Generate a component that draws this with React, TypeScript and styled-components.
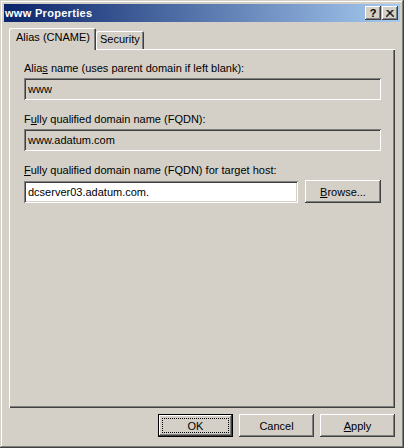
import React from 'react';
import styled, {createGlobalStyle} from 'styled-components';

const GlobalStyle = createGlobalStyle`
  html, body {
    margin: 0;
    padding: 0;
    background: #d4d0c8;
  }
  body {
    font-family: "Liberation Sans", Arial, sans-serif;
    font-size: 11px;
  }
`;

const Window = styled.div`
  width: 404px;
  height: 448px;
  box-sizing: border-box;
  padding: 4px;
  background: #d4d0c8;
  display: flex;
  flex-direction: column;
  box-shadow:
    inset -1px -1px #404040,
    inset 1px 1px #d4d0c8,
    inset -2px -2px #808080,
    inset 2px 2px #ffffff;
`;

const TitleBar = styled.div`
  height: 18px;
  display: flex;
  align-items: center;
  padding: 0 2px 0 1px;
  background: linear-gradient(to right, #0a246a, #a6caf0);
`;

const Title = styled.span`
  flex: 1;
  color: #ffffff;
  font-weight: bold;
  font-size: 11px;
  letter-spacing: 0.3px;
`;

const CaptionButtons = styled.div`
  display: flex;
  gap: 1px;
`;

const CaptionButton = styled.div`
  width: 16px;
  height: 14px;
  box-sizing: border-box;
  background: #d4d0c8;
  display: flex;
  align-items: center;
  justify-content: center;
  font-weight: bold;
  font-size: 11px;
  color: #000;
  box-shadow:
    inset -1px -1px #404040,
    inset 1px 1px #ffffff,
    inset -2px -2px #808080;
`;

const Body = styled.div`
  flex: 1;
  display: flex;
  flex-direction: column;
  padding: 6px 5px 7px 5px;
`;

const TabStrip = styled.div`
  height: 21px;
  display: flex;
  align-items: flex-end;
  position: relative;
  z-index: 1;
`;

const Tab = styled.div<{$active?: boolean}>`
  box-sizing: border-box;
  height: ${p => (p.$active ? '22px' : '18px')};
  margin-bottom: ${p => (p.$active ? '-1px' : '0')};
  padding: ${p => (p.$active ? '3px 6px 0 7px' : '2px 4px 0 4px')};
  background: #d4d0c8;
  border-radius: 2px 2px 0 0;
  line-height: 13px;
  color: #000;
  box-shadow:
    inset 1px 1px #ffffff,
    inset -1px 0 #404040,
    inset -2px 0 #808080;
`;

const Panel = styled.div`
  flex: 1;
  display: flex;
  flex-direction: column;
  gap: 13px;
  padding: 13px 14px 0 15px;
  box-shadow:
    inset 1px 1px #ffffff,
    inset -1px -1px #404040,
    inset -2px -2px #808080;
`;

const Group = styled.div`
  display: flex;
  flex-direction: column;
  gap: 3px;
`;

const Label = styled.label`
  line-height: 13px;
  color: #000;
`;

const Row = styled.div`
  display: flex;
  align-items: center;
  gap: 7px;
`;

const Field = styled.div<{$readOnly?: boolean; $grow?: boolean}>`
  ${p => (p.$grow ? 'flex: 1;' : '')}
  height: 22px;
  box-sizing: border-box;
  padding: 0 4px;
  display: flex;
  align-items: center;
  color: #000;
  background: ${p => (p.$readOnly ? '#d4d0c8' : '#ffffff')};
  box-shadow:
    inset 1px 1px #808080,
    inset -1px -1px #ffffff,
    inset 2px 2px #404040,
    inset -2px -2px #d4d0c8;
`;

const Button = styled.div<{$width?: number; $default?: boolean}>`
  width: ${p => p.$width ?? 75}px;
  height: 23px;
  box-sizing: border-box;
  display: flex;
  align-items: center;
  justify-content: center;
  background: #d4d0c8;
  color: #000;
  position: relative;
  box-shadow: ${p =>
    p.$default
      ? `inset 0 0 0 1px #000000,
         inset -2px -2px #404040,
         inset 2px 2px #ffffff,
         inset -3px -3px #808080`
      : `inset -1px -1px #404040,
         inset 1px 1px #ffffff,
         inset -2px -2px #808080`};
`;

const FocusRing = styled.span`
  position: absolute;
  inset: 4px;
  border: 1px dotted #000;
`;

const Footer = styled.div`
  display: flex;
  justify-content: flex-end;
  gap: 6px;
  margin-top: 6px;
`;

const CloseGlyph = () => (
  <svg width="8" height="7" viewBox="0 0 8 7">
    <path d="M0.5 0 L7.5 7 M1.5 0 L8.5 7 M7.5 0 L0.5 7 M6.5 0 L-0.5 7" stroke="#000" strokeWidth="1" />
  </svg>
);

export default function App() {
  return (
    <>
      <GlobalStyle />
      <Window>
        <TitleBar>
          <Title>www Properties</Title>
          <CaptionButtons>
            <CaptionButton>?</CaptionButton>
            <CaptionButton><CloseGlyph /></CaptionButton>
          </CaptionButtons>
        </TitleBar>
        <Body>
          <TabStrip>
            <Tab $active>Alias (CNAME)</Tab>
            <Tab>Security</Tab>
          </TabStrip>
          <Panel>
            <Group>
              <Label>Alia<u>s</u> name (uses parent domain if left blank):</Label>
              <Field $readOnly>www</Field>
            </Group>
            <Group>
              <Label>F<u>u</u>lly qualified domain name (FQDN):</Label>
              <Field $readOnly>www.adatum.com</Field>
            </Group>
            <Group>
              <Label><u>F</u>ully qualified domain name (FQDN) for target host:</Label>
              <Row>
                <Field $grow>dcserver03.adatum.com.</Field>
                <Button $width={76}><span><u>B</u>rowse...</span></Button>
              </Row>
            </Group>
          </Panel>
          <Footer>
            <Button $default><FocusRing />OK</Button>
            <Button>Cancel</Button>
            <Button><span><u>A</u>pply</span></Button>
          </Footer>
        </Body>
      </Window>
    </>
  );
}
